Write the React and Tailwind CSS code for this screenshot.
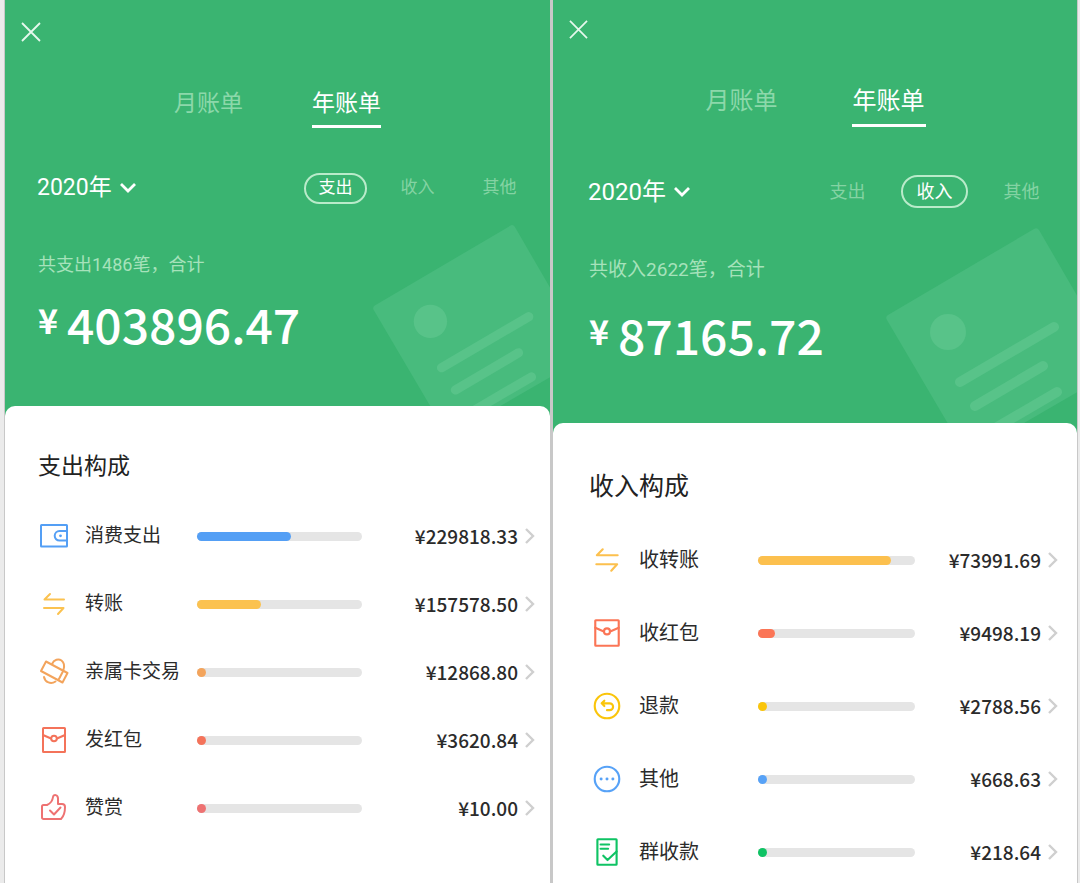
import React, { useState } from 'react';
import clsx from 'clsx';

const icons = {
    wallet: (
        <>
            <rect x="2" y="4" width="26" height="21.5" rx="0.5" />
            <path d="M28 10h-7.5a4.8 4.8 0 0 0 0 9.6H28" />
            <circle cx="21.5" cy="14.8" r="1.4" fill="currentColor" stroke="none" />
        </>
    ),
    transfer: <path d="M25 10.5H5.5L11 5M5 19h19.5L19 25" />,
    familyCard: (
        <>
            <path d="M7 4.5L28.5 16l-5 9.5L2 14zM24.3 13.8l-5 9.4" />
            <path d="M13 7c2-4.5 6.5-5.5 9.5-3.5 2.5 2 3.2 5 2 9M5 20c1 5.5 7 7.5 11.5 4.5" />
        </>
    ),
    redPacket: (
        <>
            <rect x="4" y="3" width="22" height="24" rx="0.5" />
            <path d="M4 10l8 3.5M18 13.5l8-3.5" />
            <circle cx="15" cy="13.5" r="2.8" />
        </>
    ),
    reward: (
        <>
            <path d="M4.5 12H8c3.5-1.5 5.5-4 6-8 .4-3 5-2.5 5 1.5V11h4c2 0 3 1 3 3 0 5-1 9-4 12H4.5c-.8 0-1.5-.7-1.5-1.5v-11c0-.9.6-1.5 1.5-1.5z" />
            <path d="M11 17.5l4 4 6.5-7" />
        </>
    ),
    refund: (
        <>
            <circle cx="15" cy="15" r="11.5" />
            <path d="M12.5 10l-2.5 2.5 2.5 2.5M10 12.5h7.5a3.2 3.2 0 0 1 0 6.4H15" />
        </>
    ),
    other: (
        <>
            <circle cx="15" cy="15" r="11.5" />
            <g fill="currentColor" stroke="none">
                <circle cx="9.5" cy="15" r="1.4" />
                <circle cx="15" cy="15" r="1.4" />
                <circle cx="20.5" cy="15" r="1.4" />
            </g>
        </>
    ),
    groupPay: (
        <>
            <rect x="6" y="3" width="18" height="24" rx="0.5" />
            <path d="M9 8h8M9 12h7M11.5 18.5l4 4 8.500-8" />
        </>
    ),
};

const expense = {
    type: '支出',
    count: 1486,
    total: '403896.47',
    items: [
        { icon: 'wallet', label: '消费支出', amount: '229818.33', color: 'text-[#549ff5]' },
        { icon: 'transfer', label: '转账', amount: '157578.50', color: 'text-[#fbc250]' },
        { icon: 'familyCard', label: '亲属卡交易', amount: '12868.80', color: 'text-[#f3a45c]' },
        { icon: 'redPacket', label: '发红包', amount: '3620.84', color: 'text-[#f4735a]' },
        { icon: 'reward', label: '赞赏', amount: '10.00', color: 'text-[#ee7272]' },
    ],
    styles: {
        panel: 'border-x border-r-[3px]',
        header: 'pt-[22px] pb-[58px]',
        close: 'size-5',
        tabs: 'mt-[46px] gap-[69px] text-[23px]',
        tab: 'pb-[5px]',
        filters: 'mt-11 pl-8 pr-[19px]',
        year: 'text-[23px]',
        types: 'gap-[19px] text-[17px]',
        typeButton: 'w-[63px] h-[31px]',
        summary: 'mt-[49px] pl-[33px] text-[18px]',
        total: 'mt-[21px] pl-[33px]',
        card: 'pt-[45px]',
        title: 'pl-[33px] text-[23px]',
        art: 'w-[178px]',
        list: 'mt-[23px] gap-2',
        row: 'pl-[34px] pr-[15px] text-[19px]',
        icon: 'size-[30px] mr-4',
        label: 'w-28',
        amount: 'w-[156px]',
    },
};

const income = {
    type: '收入',
    count: 2622,
    total: '87165.72',
    items: [
        { icon: 'transfer', label: '收转账', amount: '73991.69', color: 'text-[#fcc04e]' },
        { icon: 'redPacket', label: '收红包', amount: '9498.19', color: 'text-[#fb7556]' },
        { icon: 'refund', label: '退款', amount: '2788.56', color: 'text-[#fac50b]' },
        { icon: 'other', label: '其他', amount: '668.63', color: 'text-[#57a2f7]' },
        { icon: 'groupPay', label: '群收款', amount: '218.64', color: 'text-[#0fc364]' },
    ],
    styles: {
        panel: 'border-r',
        header: 'pt-5 pb-16',
        close: 'size-[19px]',
        tabs: 'mt-[46px] gap-[73px] text-[24px]',
        tab: 'px-px pb-[7px]',
        filters: 'mt-12 pl-[35px] pr-[22px]',
        year: 'text-[24px]',
        types: 'gap-5 text-[18px]',
        typeButton: 'w-[67px] h-[33px]',
        summary: 'mt-[50px] pl-9 text-[19px]',
        total: 'mt-[27px] pl-9',
        card: 'pt-12',
        title: 'pl-9 text-[25px]',
        art: 'w-48',
        list: 'mt-[27px] gap-[13px]',
        row: 'pl-[38px] pr-[19px] text-[20px]',
        icon: 'size-8 mr-4',
        label: 'w-[119px]',
        amount: 'w-[126px]',
    },
};

const HeaderArt = ({ className }) => (
    <svg viewBox="0 0 192 196" className={clsx('absolute right-0 bottom-0', className)} fill="none" aria-hidden="true">
        <path d="M3 88L149 2q3-2 5 1l80 138-152 88L2 93q-2-3 1-5z" fill="#48bb7d" />
        <circle cx="63" cy="105" r="18" fill="#58c389" />
        <path d="M75 155l94-55M90 179l68-40M112 200l60-35" stroke="#58c389" strokeWidth="10" strokeLinecap="round" />
    </svg>
);

const BillRow = ({ item, total, styles }) => {
    const percent = (Number(item.amount) / Number(total)) * 100;

    return (
        <button type="button" className={clsx('w-full h-[60px] flex items-center text-left text-[#2b2b2b]', styles.row)}>
            <svg
                viewBox="0 0 30 30"
                className={clsx('shrink-0', styles.icon, item.color)}
                fill="none"
                stroke="currentColor"
                strokeWidth="2"
                strokeLinejoin="round"
                strokeLinecap="round"
            >
                {icons[item.icon]}
            </svg>
            <span className={clsx('shrink-0 whitespace-nowrap', styles.label)}>{item.label}</span>
            <span className={clsx('flex-1 h-[9px] rounded-full bg-[#e5e5e5]', item.color)}>
                <span className="block h-full min-w-[9px] rounded-full bg-current" style={{ width: `${percent}%` }} />
            </span>
            <span className={clsx('shrink-0 text-right text-[19px] font-medium font-[Noto_Sans_CJK_SC,sans-serif]', styles.amount)}>
                ¥{item.amount}
            </span>
            <svg viewBox="0 0 11 16" className="w-[11px] h-4 ml-[6px] shrink-0" fill="none" stroke="#cfcfcf" strokeWidth="2.4">
                <path d="M2 1l7 7-7 7" />
            </svg>
        </button>
    );
};

const BillPanel = ({ data }) => {
    const { styles } = data;
    const [period, setPeriod] = useState('年账单');
    const [type, setType] = useState(data.type);

    return (
        <section className={clsx('flex flex-col min-w-0 bg-[#3ab471] border-[#c8c8c8]', styles.panel)}>
            <header className={clsx('relative overflow-hidden text-white', styles.header)}>
                <HeaderArt className={styles.art} />

                <button type="button" aria-label="关闭" className="block ml-4">
                    <svg viewBox="0 0 20 20" className={styles.close} fill="none" stroke="#e6f8ed" strokeWidth="1.8">
                        <path d="M1 1l18 18M19 1L1 19" />
                    </svg>
                </button>

                <div role="tablist" className={clsx('flex justify-center leading-8', styles.tabs)}>
                    {['月账单', '年账单'].map((name) => (
                        <button
                            key={name}
                            type="button"
                            role="tab"
                            aria-selected={period === name}
                            onClick={() => setPeriod(name)}
                            className={clsx(
                                'border-b-[3px]',
                                styles.tab,
                                period === name ? 'border-white' : 'border-transparent text-[#8cd8aa]'
                            )}
                        >
                            {name}
                        </button>
                    ))}
                </div>

                <div className={clsx('flex items-center justify-between', styles.filters)}>
                    <label className="flex items-center gap-2">
                        <select aria-label="年份" defaultValue="2020" className={clsx('appearance-none bg-transparent leading-8 h-8', styles.year)}>
                            <option value="2020">2020年</option>
                        </select>
                        <svg viewBox="0 0 16 10" className="w-4 h-[10px]" fill="none" stroke="currentColor" strokeWidth="2.8">
                            <path d="M1 1l7 7 7-7" />
                        </svg>
                    </label>
                    <div className={clsx('flex', styles.types)}>
                        {['支出', '收入', '其他'].map((name) => (
                            <button
                                key={name}
                                type="button"
                                aria-pressed={type === name}
                                onClick={() => setType(name)}
                                className={clsx(
                                    'flex items-center justify-center rounded-full border-2',
                                    styles.typeButton,
                                    type === name ? 'border-[#b9ebca]' : 'border-transparent text-[#84d3a3]'
                                )}
                            >
                                {name}
                            </button>
                        ))}
                    </div>
                </div>

                <p className={clsx('relative leading-6 text-[#a6e2bb]', styles.summary)}>
                    共{data.type}{data.count}笔，合计
                </p>
                <p className={clsx('relative flex items-start font-medium font-[Noto_Sans_CJK_SC,sans-serif]', styles.total)}>
                    <span className="w-[29px] text-[34px] leading-[44px] font-bold">¥</span>
                    <span className="text-[48px] leading-[50px]">{data.total}</span>
                </p>
            </header>

            <div className={clsx('flex-1 rounded-t-[10px] bg-white', styles.card)}>
                <h2 className={clsx('leading-8 text-[#222]', styles.title)}>{data.type}构成</h2>
                <div className={clsx('flex flex-col', styles.list)}>
                    {data.items.map((item) => (
                        <BillRow key={item.label} item={item} total={data.total} styles={styles} />
                    ))}
                </div>
            </div>
        </section>
    );
};

const App = () => (
    <main className="min-h-screen grid grid-cols-[549fr_525fr] pl-1 pr-[2px] bg-[#ebebeb] font-[Roboto,Noto_Sans_CJK_SC,sans-serif]">
        <BillPanel data={expense} />
        <BillPanel data={income} />
    </main>
);

export default App;
